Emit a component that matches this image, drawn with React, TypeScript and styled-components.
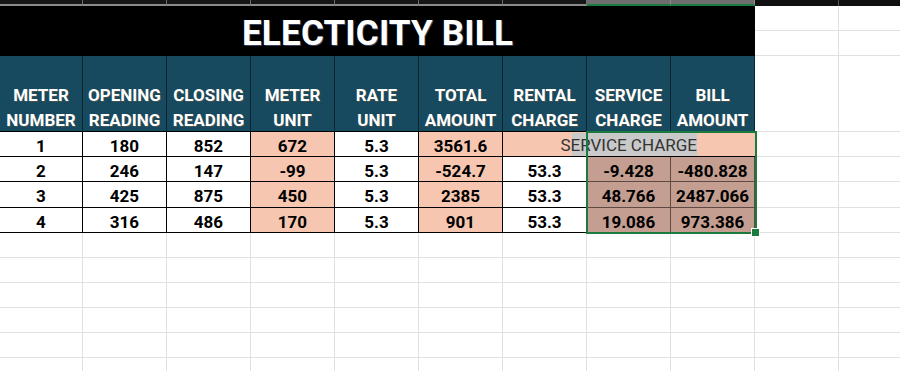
import { Fragment } from "react";
import styled, { createGlobalStyle, css } from "styled-components";

const GlobalStyle = createGlobalStyle`
  html, body {
    margin: 0;
    padding: 0;
    background: #ffffff;
  }
  body {
    width: 900px;
    height: 371px;
    overflow: hidden;
    font-family: Roboto, "Liberation Sans", Arial, sans-serif;
  }
`;

const colors = {
  teal: "#174a5e",
  salmon: "#f6c6b0",
  rosy: "#c49e90",
  grid: "#e1e1e1",
  green: "#1b7a3e",
};

const Sheet = styled.div`
  display: grid;
  grid-template-columns: 83px repeat(10, 84px);
  grid-template-rows: 6px 25px 25px 76px 25px 25px 26px 25px repeat(6, 25px);
  width: 923px;
`;

type StripKind = "dark" | "selected" | "plain";

const StripCell = styled.div<{ $kind: StripKind }>`
  box-sizing: border-box;
  border-right: 1px solid #6f6f6f;
  ${({ $kind }) =>
    $kind === "dark" &&
    css`
      background: #161616;
      border-bottom: 2px solid #8c8c8c;
    `}
  ${({ $kind }) =>
    $kind === "selected" &&
    css`
      background: #6e6e6e;
      border-right-color: #8a8a8a;
      border-bottom: 2px solid ${colors.green};
    `}
  ${({ $kind }) =>
    $kind === "plain" &&
    css`
      background: #101010;
      border-right-color: #555;
    `}
`;

const TitleCell = styled.div`
  grid-column: 1 / 10;
  grid-row: 2 / 4;
  background: #000;
  color: #fff;
  display: flex;
  align-items: center;
  justify-content: center;
  padding-top: 4px;
  box-sizing: border-box;
  font-size: 35px;
  font-weight: 700;
  letter-spacing: 0.2px;
  text-shadow: 1px 1px 0 rgba(90, 110, 160, 0.6);
`;

const BlankCell = styled.div`
  box-sizing: border-box;
  border-right: 1px solid ${colors.grid};
  border-bottom: 1px solid ${colors.grid};
  background: #fff;
`;

const HeaderCell = styled.div`
  box-sizing: border-box;
  background: ${colors.teal};
  border-right: 1px solid #0b2632;
  border-bottom: 1px solid #000;
  display: flex;
  flex-direction: column;
  justify-content: flex-end;
  align-items: center;
  color: #fff;
  font-size: 17px;
  font-weight: 700;
  line-height: 25px;
  text-shadow: 0.5px 0.5px 0 rgba(120, 90, 60, 0.5);
`;

const HeaderLine = styled.span`
  transform: translateY(2px);
`;

type Fill = "white" | "salmon" | "rosy";

const fills: Record<Fill, string> = {
  white: "#ffffff",
  salmon: colors.salmon,
  rosy: colors.rosy,
};

const DataCell = styled.div<{ $fill: Fill }>`
  box-sizing: border-box;
  background: ${({ $fill }) => fills[$fill]};
  border-right: 1px solid ${({ $fill }) => ($fill === "rosy" ? "#5e4a43" : "#000")};
  border-bottom: 1px solid ${({ $fill }) => ($fill === "rosy" ? "#5e4a43" : "#000")};
  display: flex;
  align-items: center;
  justify-content: center;
  padding-top: 3px;
  color: #000;
  font-size: 17px;
  font-weight: 700;
`;

const EditCell = styled.div`
  grid-column: span 3;
  position: relative;
  box-sizing: border-box;
  background: ${colors.salmon};
  border-bottom: 1px solid #000;
  display: flex;
  align-items: center;
  justify-content: flex-end;
  padding-right: 58px;
`;

const Highlight = styled.span`
  width: 125px;
  height: 23px;
  background: #c9c9c9;
  display: flex;
  align-items: center;
  justify-content: flex-end;
  padding-top: 2px;
  box-sizing: border-box;
  white-space: nowrap;
  color: #333;
  font-size: 17px;
  font-weight: 400;
`;

const Caret = styled.span`
  width: 1px;
  height: 20px;
  background: #222;
`;

const Selection = styled.div`
  position: absolute;
  left: 83px;
  top: -1px;
  width: 171px;
  height: 103px;
  box-sizing: border-box;
  border: 2px solid ${colors.green};
  z-index: 2;
  pointer-events: none;
`;

const Handle = styled.span`
  position: absolute;
  right: -5px;
  bottom: -5px;
  width: 7px;
  height: 7px;
  background: ${colors.green};
  border: 1px solid #fff;
`;

const headers = [
  ["METER", "NUMBER"],
  ["OPENING", "READING"],
  ["CLOSING", "READING"],
  ["METER", "UNIT"],
  ["RATE", "UNIT"],
  ["TOTAL", "AMOUNT"],
  ["RENTAL", "CHARGE"],
  ["SERVICE", "CHARGE"],
  ["BILL", "AMOUNT"],
];

const rows = [
  ["1", "180", "852", "672", "5.3", "3561.6"],
  ["2", "246", "147", "-99", "5.3", "-524.7", "53.3", "-9.428", "-480.828"],
  ["3", "425", "875", "450", "5.3", "2385", "53.3", "48.766", "2487.066"],
  ["4", "316", "486", "170", "5.3", "901", "53.3", "19.086", "973.386"],
];

const fillFor = (col: number): Fill => {
  if (col === 3 || col === 5) return "salmon";
  if (col === 7 || col === 8) return "rosy";
  return "white";
};

const stripKinds: StripKind[] = [
  "dark", "dark", "dark", "dark", "dark", "dark", "dark",
  "selected", "selected", "plain", "plain",
];

const App = () => {
  return (
    <>
      <GlobalStyle />
      <Sheet>
        {stripKinds.map((kind, i) => (
          <StripCell key={`s${i}`} $kind={kind} />
        ))}

        <TitleCell>ELECTICITY BILL</TitleCell>
        {[0, 1, 2, 3].map((i) => (
          <BlankCell key={`t${i}`} />
        ))}

        {headers.map(([a, b], i) => (
          <HeaderCell key={`h${i}`}>
            <HeaderLine>{a}</HeaderLine>
            <HeaderLine>{b}</HeaderLine>
          </HeaderCell>
        ))}
        <BlankCell />
        <BlankCell />

        {rows.map((row, r) => (
          <Fragment key={`r${r}`}>
            {row.map((value, c) => (
              <DataCell key={`d${c}`} $fill={fillFor(c)}>
                {value}
              </DataCell>
            ))}
            {r === 0 && (
              <EditCell>
                <Highlight>
                  SERVICE CHARGE
                  <Caret />
                </Highlight>
                <Selection>
                  <Handle />
                </Selection>
              </EditCell>
            )}
            <BlankCell />
            <BlankCell />
          </Fragment>
        ))}

        {Array.from({ length: 6 * 11 }).map((_, i) => (
          <BlankCell key={`e${i}`} />
        ))}
      </Sheet>
    </>
  );
};

export default App;
